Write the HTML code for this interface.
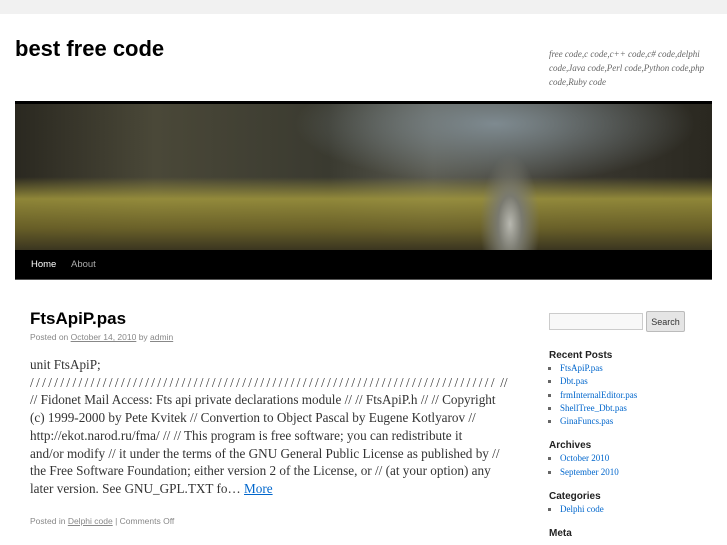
<!DOCTYPE html>
<html><head><meta charset="utf-8">
<style>
body{margin:0;background:#f1f1f1;font-family:"Liberation Sans",sans-serif;}
#wrap{position:absolute;left:0;top:14px;width:727px;height:531px;background:#fff;overflow:hidden}
h1{position:absolute;left:15px;top:22px;margin:0;font-size:22px;font-weight:bold;color:#000}
.desc{position:absolute;left:549px;top:33px;width:168px;font:italic 9px/14px "Liberation Serif",serif;color:#666}
.hdr{position:absolute;left:15px;top:87px;width:697px;height:149px;border-top:3px solid #000;box-sizing:border-box;
background:
radial-gradient(ellipse 30px 70px at 495px 120px,#b8b8b0 0,#7a7a70 40%,transparent 100%),
linear-gradient(180deg,transparent 0,transparent 50%,rgba(160,150,60,.85) 65%,rgba(110,100,40,.9) 85%,#3a3520 100%),
radial-gradient(ellipse 200px 60px at 480px 20px,#7e8a90,transparent),
linear-gradient(90deg,#2a2820,#4a4838 20%,#3a3a30 45%,#5a5a50 60%,#3a3830 80%,#2a2820);}
.nav{position:absolute;left:15px;top:236px;width:697px;height:29px;background:#000;border-bottom:1px solid #555}
.nav a{position:absolute;top:9px;font-size:9.5px;color:#fff;text-decoration:none}
.title{position:absolute;left:30px;top:295px;font-size:17px;font-weight:bold;color:#000;margin:0}
.meta{position:absolute;left:30px;top:318px;font-size:8.5px;color:#888}
.meta a,.foot a{color:#888;text-decoration:underline}
.post{position:absolute;left:30px;top:342px;width:480px;font:13.2px/17.7px "Liberation Serif",serif;color:#333;white-space:nowrap}
.post a{color:#0066cc;text-decoration:underline}
.sl{letter-spacing:2.4px}
.foot{position:absolute;left:30px;top:502px;font-size:8.5px;color:#888}
.side{position:absolute;left:549px;top:299px;width:170px}
.side input{width:92px;height:15px;border:1px solid #ccc;background:#f8f8f8;vertical-align:top;padding:0;margin:0}
.side button{position:absolute;left:97px;top:-2px;height:21px;width:39px;font-size:9px;background:#e5e5e5;border:1px solid #bbb;border-radius:2px;padding:0;color:#333}
.side h3{font-size:10px;margin:0;color:#222}
.side ul{margin:1px 0 12px 0;padding:0 0 0 11px;list-style:square;font:9px/13.3px "Liberation Serif",serif;color:#555}
.side li{color:#666}
.side li span{color:#0066cc}
</style></head><body>
<div id="wrap">
<h1>best free code</h1>
<div class="desc">free code,c code,c++ code,c# code,delphi code,Java code,Perl code,Python code,php code,Ruby code</div>
<div class="hdr"></div>
<div class="nav"><a style="left:16px">Home</a><a style="left:56px;color:#aaa">About</a></div>
<div class="title">FtsApiP.pas</div>
<div class="meta">Posted on <a>October 14, 2010</a> by <a>admin</a></div>
<div class="post">unit FtsApiP;<br><span class="sl">/////////////////////////////////////////////////////////////////////////////</span> //<br>// Fidonet Mail Access: Fts api private declarations module // // FtsApiP.h // // Copyright<br>(c) 1999-2000 by Pete Kvitek // Convertion to Object Pascal by Eugene Kotlyarov //<br>http://ekot.narod.ru/fma/ // // This program is free software; you can redistribute it<br>and/or modify // it under the terms of the GNU General Public License as published by //<br>the Free Software Foundation; either version 2 of the License, or // (at your option) any<br>later version. See GNU_GPL.TXT fo… <a>More</a></div>
<div class="foot">Posted in <a>Delphi code</a> | Comments Off</div>
<div class="side">
<input><button>Search</button>
<div style="height:19px"></div>
<h3>Recent Posts</h3>
<ul><li><span>FtsApiP.pas</span></li><li><span>Dbt.pas</span></li><li><span>frmInternalEditor.pas</span></li><li><span>ShellTree_Dbt.pas</span></li><li><span>GinaFuncs.pas</span></li></ul>
<h3>Archives</h3>
<ul><li><span>October 2010</span></li><li><span>September 2010</span></li></ul>
<h3>Categories</h3>
<ul><li><span>Delphi code</span></li></ul>
<h3>Meta</h3>
</div>
</div>
</body></html>
